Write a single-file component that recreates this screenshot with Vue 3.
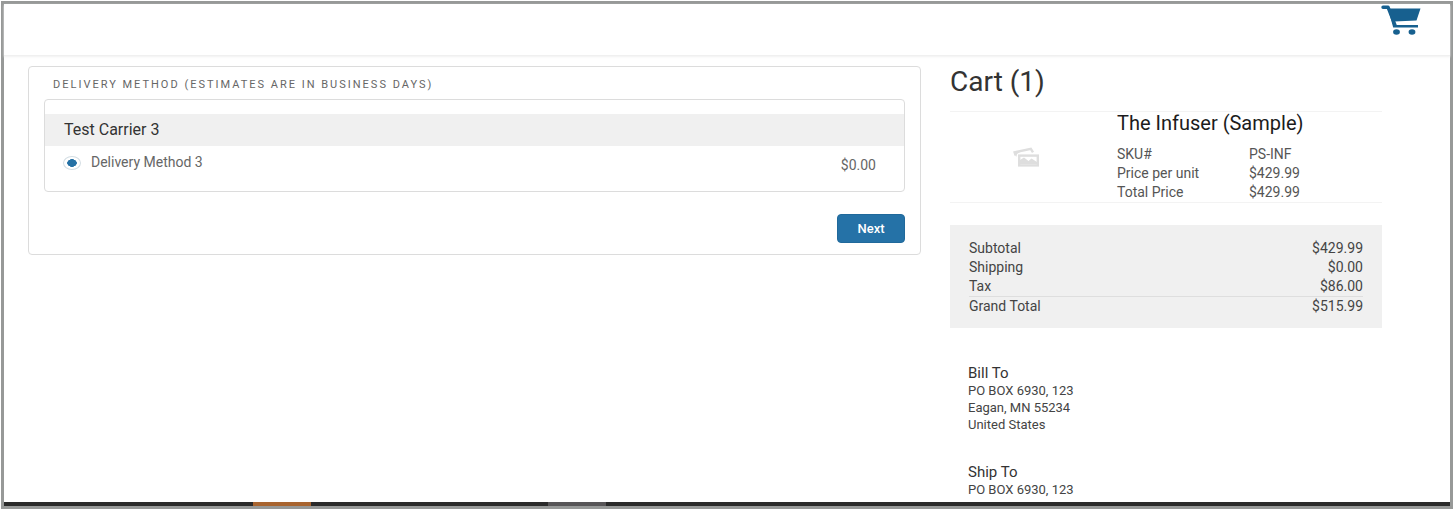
<script setup>
import { ref } from 'vue'

const method = ref('method-3')
const details = [
  { label: 'SKU#', value: 'PS-INF' },
  { label: 'Price per unit', value: '$429.99' },
  { label: 'Total Price', value: '$429.99' },
]
const totals = [
  { label: 'Subtotal', value: '$429.99' },
  { label: 'Shipping', value: '$0.00' },
  { label: 'Tax', value: '$86.00' },
  { label: 'Grand Total', value: '$515.99', grand: true },
]
const addresses = [
  { title: 'Bill To', lines: ['PO BOX 6930, 123', 'Eagan, MN 55234', 'United States'] },
  { title: 'Ship To', lines: ['PO BOX 6930, 123'] },
]
</script>

<template>
  <div class="frame">
    <header class="topbar">
      <a class="cart-link" href="#cart" aria-label="Cart">
        <svg width="40" height="30" viewBox="0 0 40 30" aria-hidden="true">
          <path
            d="M2 2.2H7L14 20"
            fill="none"
            stroke="#17608f"
            stroke-width="3.4"
            stroke-linecap="round"
            stroke-linejoin="round"
          />
          <path d="M7 3.6H39.5L35.5 15.4L13 16.6V20H37V22.6H12.2Z" fill="#17608f" />
          <ellipse cx="15.5" cy="27" rx="3.4" ry="2.7" fill="#17608f" />
          <ellipse cx="31" cy="27" rx="3.4" ry="2.7" fill="#17608f" />
        </svg>
      </a>
    </header>

    <main class="content">
      <form class="card" @submit.prevent>
        <h2 id="delivery-heading" class="card-title">Delivery Method (estimates are in business days)</h2>
        <div class="carrier" role="radiogroup" aria-labelledby="delivery-heading">
          <h3 class="carrier-name">Test Carrier 3</h3>
          <div class="option">
            <input id="method-3" v-model="method" class="radio" type="radio" name="delivery" value="method-3" />
            <label class="option-label" for="method-3">Delivery Method 3</label>
            <span class="option-price">$0.00</span>
          </div>
        </div>
        <div class="actions">
          <button class="next" type="submit">Next</button>
        </div>
      </form>

      <aside class="summary">
        <h1 class="cart-title">Cart (1)</h1>
        <article class="item">
          <div class="thumb">
            <svg width="26" height="20" viewBox="0 0 26 20" aria-hidden="true">
              <path d="M2.6 8.5L1.6 5.3L17.8 1.8L20 5.4" fill="none" stroke="#dedede" stroke-width="2.4" />
              <path d="M1 5L8 4.5L4 7L3.2 10Z" fill="#dedede" />
              <rect x="6.2" y="8.6" width="18.6" height="9.8" fill="none" stroke="#dedede" stroke-width="2.4" />
              <path d="M7 17V13L11 10.5L15.5 14L18.5 11.5L24 15V17Z" fill="#dedede" />
            </svg>
          </div>
          <div class="item-body">
            <h2 class="item-name">The Infuser (Sample)</h2>
            <dl class="details">
              <template v-for="row in details" :key="row.label">
                <dt>{{ row.label }}</dt>
                <dd>{{ row.value }}</dd>
              </template>
            </dl>
          </div>
        </article>

        <div class="totals">
          <table class="totals-table">
            <tbody>
              <tr v-for="row in totals" :key="row.label" :class="{ grand: row.grand }">
                <th scope="row">{{ row.label }}</th>
                <td>{{ row.value }}</td>
              </tr>
            </tbody>
          </table>
        </div>

        <div class="addresses">
          <section v-for="entry in addresses" :key="entry.title">
            <h3 class="address-title">{{ entry.title }}</h3>
            <p v-for="line in entry.lines" :key="line" class="address-line">{{ line }}</p>
          </section>
        </div>
      </aside>
    </main>

    <footer class="strip">
      <span class="strip-orange"></span>
      <span class="strip-grey"></span>
    </footer>
  </div>
</template>

<style>
html {
  background: #fff;
}
body {
  margin: 0;
}
</style>

<style scoped>
.frame,
.frame * {
  box-sizing: border-box;
}
.frame {
  display: flex;
  flex-direction: column;
  min-height: calc(100vh - 2px);
  margin: 1px;
  border: 3px solid #979998;
  background: #fff;
  color: #444;
  font-family: Roboto, "Liberation Sans", sans-serif;
  font-size: 14px;
  line-height: 19px;
}
h1,
h2,
h3,
p,
dl,
dd {
  margin: 0;
  font-weight: 400;
}
.topbar {
  display: flex;
  justify-content: flex-end;
  height: 52px;
  padding: 1px 29px 0 0;
  border-bottom: 1px solid #f0f0f0;
  box-shadow: 0 1px 2px #f1f1f1;
}
.cart-link {
  height: 30px;
}
.cart-link svg,
.thumb svg {
  display: block;
}
.content {
  display: grid;
  grid-template-columns: minmax(0, 1fr) 432px;
  gap: 29px;
  align-items: start;
  flex: 1;
  padding: 10px 68px 0 24px;
}
.card {
  padding: 9px 15px 11px;
  border: 1px solid #dcdcdc;
  border-radius: 4px;
}
.card-title {
  padding-left: 9px;
  color: #666;
  font-size: 11px;
  line-height: 18px;
  letter-spacing: 2px;
  text-transform: uppercase;
}
.carrier {
  margin-top: 5px;
  padding: 14px 0 16px;
  border: 1px solid #dcdcdc;
  border-radius: 4px;
}
.carrier-name {
  padding: 0 19px;
  background: #f0f0f0;
  color: #333;
  font-size: 16px;
  line-height: 32px;
}
.option {
  display: flex;
  align-items: flex-start;
  padding: 7px 28px 0 18px;
  color: #666;
}
.radio {
  appearance: none;
  width: 18px;
  height: 14px;
  margin: 3px 10px 0 0;
  border: 1px solid #d3dde3;
  border-radius: 50%;
  background: #fff;
}
.radio:checked {
  background: radial-gradient(ellipse 5px 4px at center, #2571a5 90%, #fff);
}
.option-label {
  flex: 1;
}
.option-price {
  padding-top: 3px;
}
.actions {
  display: flex;
  justify-content: flex-end;
  margin-top: 22px;
}
.next {
  width: 68px;
  height: 29px;
  padding: 0;
  border: 1px solid #20699b;
  border-radius: 4px;
  background: #2572a7;
  color: #fff;
  font: 500 13px/19px Roboto, "Liberation Sans", sans-serif;
}
.cart-title {
  color: #333;
  font-size: 28px;
  line-height: 32px;
}
.item {
  display: flex;
  margin-top: 13px;
  border-top: 1px solid #f3f3f3;
  border-bottom: 1px solid #f3f3f3;
}
.thumb {
  display: flex;
  flex: 0 0 167px;
  align-items: center;
  padding-left: 63px;
}
.item-name {
  color: #1c1c1c;
  font-size: 20px;
  line-height: 22px;
}
.details {
  display: grid;
  grid-template-columns: 132px auto;
  margin-top: 11px;
  color: #555;
}
.totals {
  margin-top: 22px;
  padding: 14px 19px 13px;
  background: #f0f0f0;
}
.totals-table {
  width: 100%;
  border-spacing: 0;
}
.totals-table th,
.totals-table td {
  padding: 0;
  font-weight: 400;
  text-align: left;
}
.totals-table td {
  text-align: right;
}
.totals-table .grand th,
.totals-table .grand td {
  border-top: 1px solid #dedede;
  line-height: 18px;
}
.addresses {
  display: grid;
  gap: 30px;
  margin-top: 36px;
  padding-left: 18px;
}
.address-title {
  color: #333;
  font-size: 15px;
  line-height: 18px;
}
.address-line {
  font-size: 13px;
  line-height: 17px;
}
.strip {
  display: grid;
  grid-template-columns: 249px 58px 237px 58px;
  height: 4px;
  background: #2a2a2a;
}
.strip-orange {
  grid-column: 2;
  background: #a8642f;
}
.strip-grey {
  grid-column: 4;
  background: #575557;
}
</style>
